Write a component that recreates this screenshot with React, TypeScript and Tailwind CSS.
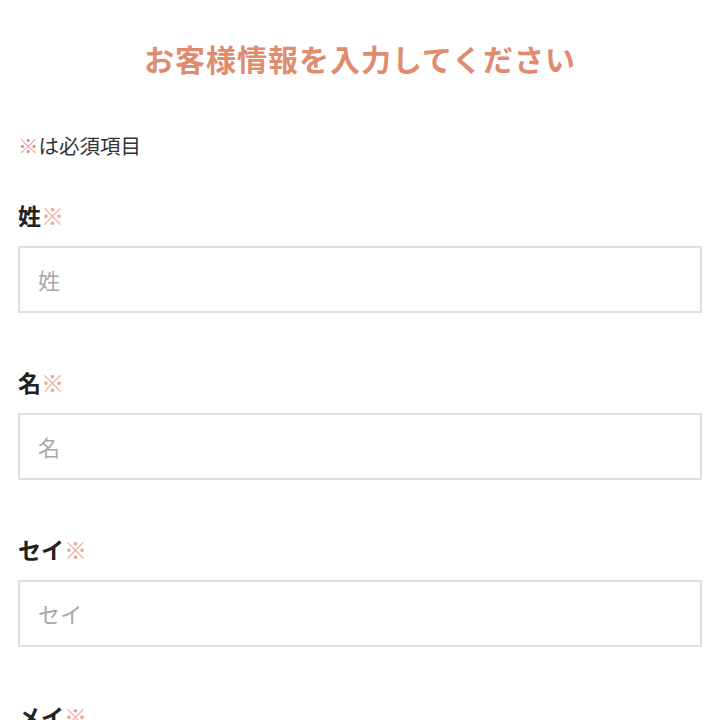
export default function App() {
  const fields = ["姓", "名", "セイ", "メイ"];
  return (
    <div
      className="w-[720px] h-[720px] overflow-hidden bg-white"
      style={{ fontFamily: '"Noto Sans CJK JP", "Noto Sans", sans-serif' }}
    >
      <div className="px-[18px] pt-[36px]">
        <h1 className="text-center text-[30px] leading-[44px] font-bold tracking-[1px] text-[#df8b6e]">
          お客様情報を入力してください
        </h1>
        <p className="mt-[51px] text-[20.5px] leading-[28px] text-[#333]">
          <span className="text-[#e9868a]">※</span>は必須項目
        </p>
        <div className="mt-[40px] flex flex-col">
          {fields.map((f, i) => (
            <div key={f} className={i === 0 ? "" : "mt-[53px]"}>
              <div className="text-[23px] leading-[32px] font-bold text-[#222]">
                {f}
                <span className="font-normal text-[#eda59b]">※</span>
              </div>
              <div className="mt-[15px] h-[67px] border-2 border-[#e0e0e0] flex items-center px-[18px]">
                <span className="text-[22px] text-[#a8a8a8]">{f}</span>
              </div>
            </div>
          ))}
        </div>
      </div>
    </div>
  );
}
